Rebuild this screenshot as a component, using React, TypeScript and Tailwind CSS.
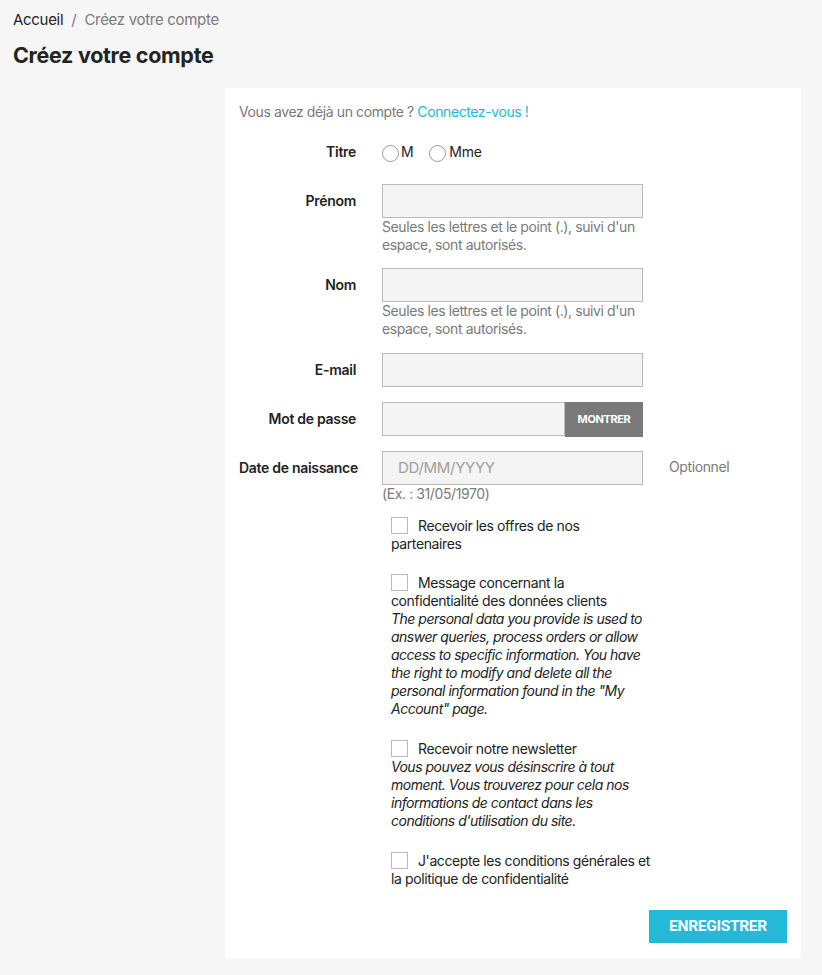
const FONT = { fontFamily: "Inter, 'Noto Sans', sans-serif" };

function Label({ children }: { children: React.ReactNode }) {
  return (
    <div className="w-[117px] shrink-0 text-right font-semibold text-[#232323] text-[14px] tracking-[-0.3px] pt-[6px] whitespace-nowrap">
      {children}
    </div>
  );
}

function Field({ placeholder }: { placeholder?: string }) {
  return (
    <div className="w-[261px] h-[34px] border border-[#bbbbbb] bg-[#f4f4f4] text-[15px] text-[#a0a0a0] px-[15px] flex items-center tracking-[-0.3px]">
      {placeholder}
    </div>
  );
}

function Help({ children }: { children: React.ReactNode }) {
  return (
    <div className="w-[261px] text-[14px] leading-[18px] text-[#7a7a7a] tracking-[-0.4px]">
      {children}
    </div>
  );
}

function Box() {
  return <span className="inline-block w-[17px] h-[17px] border border-[#bbbbbb] bg-white align-[-3px] mr-[10px]" />;
}

function Check({ label, note, className = "" }: { label: string; note?: string; className?: string }) {
  return (
    <div className={`w-[261px] text-[14px] leading-[18px] text-[#232323] tracking-[-0.4px] ${className}`}>
      <div>
        <Box />
        {label}
      </div>
      {note && <div className="italic tracking-[-0.5px]">{note}</div>}
    </div>
  );
}

export default function App() {
  return (
    <div className="min-h-[975px] bg-[#f6f6f6] px-[13px] pt-[10px]" style={FONT}>
      {/* Breadcrumb */}
      <div className="text-[15px] tracking-[-0.3px] leading-[20px]">
        <span className="text-[#232323]">Accueil</span>
        <span className="text-[#7a7a7a] mx-[8px]">/</span>
        <span className="text-[#7a7a7a]">Créez votre compte</span>
      </div>
      <h1 className="mt-[12px] text-[21.5px] font-bold text-[#232323] tracking-[-0.3px] leading-[26px]">
        Créez votre compte
      </h1>

      {/* Card */}
      <div className="ml-[212px] mt-[20px] w-[576px] bg-white px-[14px] pt-[14px] pb-[15px]">
        <p className="text-[14px] text-[#7a7a7a] tracking-[-0.4px] leading-[20px]">
          Vous avez déjà un compte ? <span className="text-[#24b9d7]">Connectez-vous !</span>
        </p>

        <div className="flex flex-col mt-[19px]">
          {/* Titre */}
          <div className="flex gap-[26px] items-center">
            <div className="w-[117px] text-right font-semibold text-[#232323] text-[14px] tracking-[-0.3px]">Titre</div>
            <div className="flex items-center gap-[16px] text-[14px] text-[#232323] tracking-[-0.3px]">
              <span className="flex items-center">
                <span className="w-[17px] h-[17px] rounded-full border border-[#999] mr-[2px] mt-[3px]" />M
              </span>
              <span className="flex items-center">
                <span className="w-[17px] h-[17px] rounded-full border border-[#999] mr-[3px] mt-[3px]" />Mme
              </span>
            </div>
          </div>

          {/* Prénom */}
          <div className="flex gap-[26px] mt-[22px]">
            <Label>Prénom</Label>
            <div>
              <Field />
              <Help>Seules les lettres et le point (.), suivi d'un espace, sont autorisés.</Help>
            </div>
          </div>

          {/* Nom */}
          <div className="flex gap-[26px] mt-[14px]">
            <Label>Nom</Label>
            <div>
              <Field />
              <Help>Seules les lettres et le point (.), suivi d'un espace, sont autorisés.</Help>
            </div>
          </div>

          {/* E-mail */}
          <div className="flex gap-[26px] mt-[15px]">
            <Label>E-mail</Label>
            <Field />
          </div>

          {/* Mot de passe */}
          <div className="flex gap-[26px] mt-[15px]">
            <Label>Mot de passe</Label>
            <div className="flex w-[261px] h-[35px]">
              <div className="flex-1 h-[34px] border border-[#bbbbbb] bg-[#f4f4f4]" />
              <div className="w-[78px] bg-[#7a7a7a] text-white text-[11px] font-bold flex items-center justify-center tracking-[-0.4px]">
                MONTRER
              </div>
            </div>
          </div>

          {/* Date */}
          <div className="flex gap-[26px] mt-[14px]">
            <Label>Date de naissance</Label>
            <div>
              <Field placeholder="DD/MM/YYYY" />
              <div className="text-[14px] leading-[18px] text-[#7a7a7a] tracking-[-0.4px]">(Ex. : 31/05/1970)</div>
            </div>
            <div className="text-[14px] text-[#7a7a7a] tracking-[-0.4px] pt-[5px]">Optionnel</div>
          </div>

          {/* Checkboxes */}
          <div className="ml-[152px] mt-[14px] flex flex-col">
            <Check label="Recevoir les offres de nos partenaires" />
            <Check
              className="mt-[21px]"
              label="Message concernant la confidentialité des données clients"
              note={'The personal data you provide is used to answer queries, process orders or allow access to specific information. You have the right to modify and delete all the personal information found in the "My Account" page.'}
            />
            <Check
              className="mt-[22px]"
              label="Recevoir notre newsletter"
              note="Vous pouvez vous désinscrire à tout moment. Vous trouverez pour cela nos informations de contact dans les conditions d'utilisation du site."
            />
            <Check
              className="mt-[22px]"
              label="J'accepte les conditions générales et la politique de confidentialité"
            />
          </div>

          <div className="flex justify-end mt-[22px]">
            <button
              className="w-[138px] h-[33px] bg-[#24b9d7] text-white text-[15.5px] font-bold tracking-[-0.3px]"
              style={{ fontFamily: "Roboto, sans-serif" }}
            >
              ENREGISTRER
            </button>
          </div>
        </div>
      </div>
    </div>
  );
}
